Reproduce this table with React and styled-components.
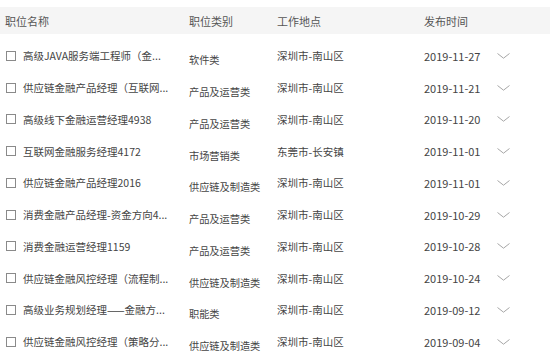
import React from 'react';
import styled, { createGlobalStyle } from 'styled-components';

const GlobalStyle = createGlobalStyle`
  body {
    margin: 0;
    background: #fff;
    font-family: "Noto Sans CJK SC", "Noto Sans", sans-serif;
  }
`;

const jobs = [
  { title: '高级JAVA服务端工程师（金...', type: '软件类', city: '深圳市-南山区', date: '2019-11-27' },
  { title: '供应链金融产品经理（互联网...', type: '产品及运营类', city: '深圳市-南山区', date: '2019-11-21' },
  { title: '高级线下金融运营经理4938', type: '产品及运营类', city: '深圳市-南山区', date: '2019-11-20' },
  { title: '互联网金融服务经理4172', type: '市场营销类', city: '东莞市-长安镇', date: '2019-11-01' },
  { title: '供应链金融产品经理2016', type: '供应链及制造类', city: '深圳市-南山区', date: '2019-11-01' },
  { title: '消费金融产品经理-资金方向4...', type: '产品及运营类', city: '深圳市-南山区', date: '2019-10-29' },
  { title: '消费金融运营经理1159', type: '产品及运营类', city: '深圳市-南山区', date: '2019-10-28' },
  { title: '供应链金融风控经理（流程制...', type: '供应链及制造类', city: '深圳市-南山区', date: '2019-10-24' },
  { title: '高级业务规划经理——金融方...', type: '职能类', city: '深圳市-南山区', date: '2019-09-12' },
  { title: '供应链金融风控经理（策略分...', type: '供应链及制造类', city: '深圳市-南山区', date: '2019-09-04' },
];

const Chevron = () => (
  <svg width="13" height="6" viewBox="0 0 13 6" fill="none">
    <polyline points="0.5,0.5 6.5,5.2 12.5,0.5" stroke="#a6a6a6" strokeWidth="1" />
  </svg>
);

export default function App() {
  return (
    <>
      <GlobalStyle />
      <Page>
        <HeaderRow>
          <HeadCell>职位名称</HeadCell>
          <HeadCell>职位类别</HeadCell>
          <HeadCell>工作地点</HeadCell>
          <HeadCell>发布时间</HeadCell>
          <span />
        </HeaderRow>
        <List>
          {jobs.map((job) => (
            <Row key={job.title + job.date}>
              <TitleCell>
                <Checkbox />
                <span>{job.title}</span>
              </TitleCell>
              <TypeCell>{job.type}</TypeCell>
              <Cell>{job.city}</Cell>
              <DateCell>{job.date}</DateCell>
              <ChevronCell>
                <Chevron />
              </ChevronCell>
            </Row>
          ))}
        </List>
      </Page>
    </>
  );
}

const Page = styled.div`
  width: 550px;
  height: 361px;
  overflow: hidden;
  padding-top: 7px;
  box-sizing: border-box;
`;

const columns = '189px 88px 147px 73px 1fr';

const HeaderRow = styled.div`
  display: grid;
  grid-template-columns: ${columns};
  align-items: center;
  height: 27px;
  background: #f5f5f5;
`;

const HeadCell = styled.div`
  font-size: 11px;
  color: #555;
  white-space: nowrap;
  &:first-child {
    padding-left: 5px;
  }
`;

const List = styled.div`
  padding-top: 6px;
`;

const Row = styled.div`
  display: grid;
  grid-template-columns: ${columns};
  align-items: center;
  height: 31.75px;
  font-size: 10.5px;
  color: #444;
`;

const Cell = styled.div`
  white-space: nowrap;
`;

const TitleCell = styled(Cell)`
  display: flex;
  align-items: center;
  gap: 7px;
  padding-left: 6px;
`;

const TypeCell = styled(Cell)`
  padding-top: 8px;
  font-size: 10.2px;
`;

const DateCell = styled(Cell)`
  font-size: 11px;
`;

const Checkbox = styled.span`
  width: 8px;
  height: 8px;
  border: 1px solid #8a8a8a;
  flex-shrink: 0;
`;

const ChevronCell = styled.div`
  display: flex;
  align-items: center;
`;
